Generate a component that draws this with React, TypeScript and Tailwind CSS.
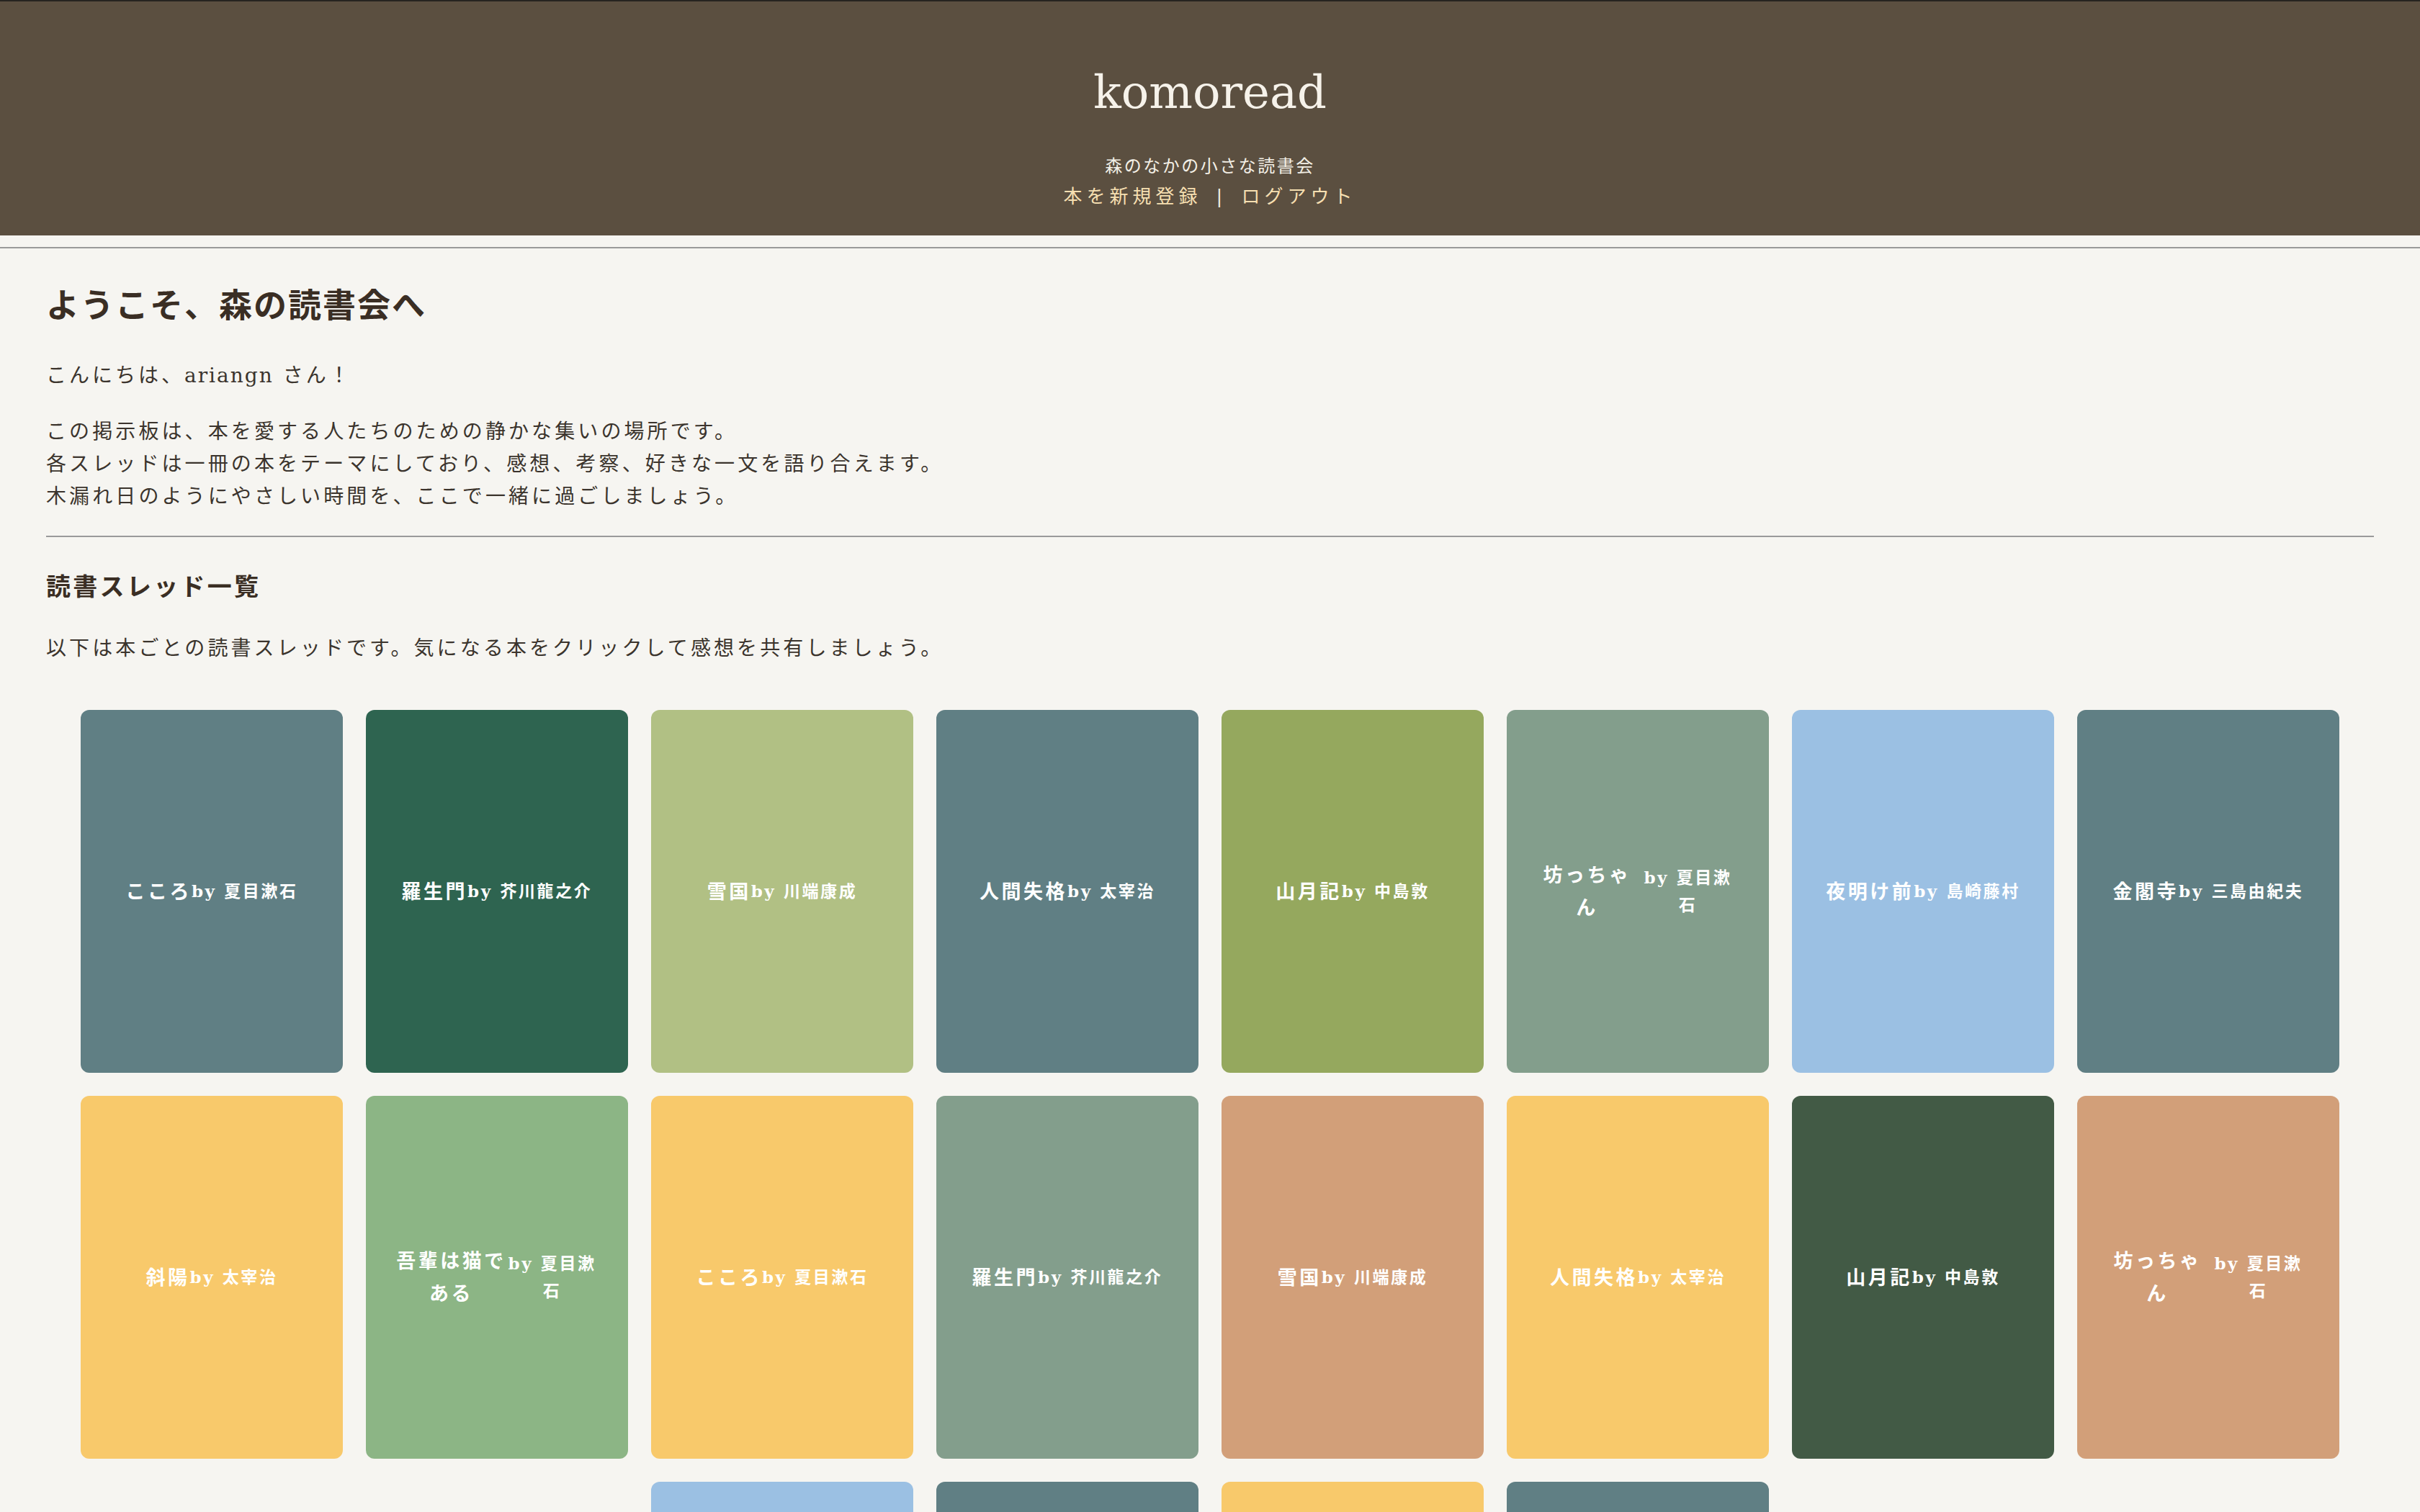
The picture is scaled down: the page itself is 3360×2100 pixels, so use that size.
// 森の読書会 — トップページ（スレッド一覧）

const FONT = "font-['DejaVu_Serif','Noto_Sans_CJK_JP',sans-serif]"

interface Book {
  title: string
  author: string
  color: string
}

const books: Book[] = [
  { title: 'こころ', author: '夏目漱石', color: 'bg-[#607f84]' },
  { title: '羅生門', author: '芥川龍之介', color: 'bg-[#2e6450]' },
  { title: '雪国', author: '川端康成', color: 'bg-[#b1c084]' },
  { title: '人間失格', author: '太宰治', color: 'bg-[#607f84]' },
  { title: '山月記', author: '中島敦', color: 'bg-[#95a85e]' },
  { title: '坊っちゃん', author: '夏目漱石', color: 'bg-[#839e8c]' },
  { title: '夜明け前', author: '島崎藤村', color: 'bg-[#9bc0e3]' },
  { title: '金閣寺', author: '三島由紀夫', color: 'bg-[#607f84]' },
  { title: '斜陽', author: '太宰治', color: 'bg-[#f8c96b]' },
  { title: '吾輩は猫である', author: '夏目漱石', color: 'bg-[#8cb585]' },
  { title: 'こころ', author: '夏目漱石', color: 'bg-[#f8c96b]' },
  { title: '羅生門', author: '芥川龍之介', color: 'bg-[#839e8c]' },
  { title: '雪国', author: '川端康成', color: 'bg-[#d29f79]' },
  { title: '人間失格', author: '太宰治', color: 'bg-[#f8c96b]' },
  { title: '山月記', author: '中島敦', color: 'bg-[#425a45]' },
  { title: '坊っちゃん', author: '夏目漱石', color: 'bg-[#d29f79]' },
  { title: '夜明け前', author: '島崎藤村', color: 'bg-[#9bc0e3]' },
  { title: '金閣寺', author: '三島由紀夫', color: 'bg-[#607f84]' },
  { title: '斜陽', author: '太宰治', color: 'bg-[#f8c96b]' },
  { title: '吾輩は猫である', author: '夏目漱石', color: 'bg-[#607f84]' },
]

function BookCard({ book }: { book: Book }) {
  return (
    <a
      href="#"
      className={`${book.color} w-[364px] h-[504px] rounded-[12px] flex items-center justify-center px-[42px] text-white text-center`}
    >
      <div className="flex items-center">
        <span className="text-[27px] tracking-[3.5px] leading-[45px] font-bold">
          {book.title}
        </span>
        <span className="shrink-[0.5] text-[23px] tracking-[2.6px] leading-[38px] font-bold">
          by {book.author}
        </span>
      </div>
    </a>
  )
}

export default function App() {
  return (
    <div className={`min-h-screen bg-[#f6f5f1] text-[#3b342d] ${FONT}`}>

      {/* ヘッダー */}
      <header className="h-[327px] bg-[#5b4f40] border-t-2 border-[#262320] pt-[94px] flex flex-col items-center">
        <h1 className="text-[64px] leading-[64px] text-[#f6f2ea]">komoread</h1>
        <p className="mt-[53px] text-[24px] leading-[36px] tracking-[2.5px] text-[#f3efe6]">
          森のなかの小さな読書会
        </p>
        <nav className="mt-[6px] flex items-center text-[26px] leading-[36px] tracking-[6px]">
          <a href="#" className="text-[#f6dfb1]">本を新規登録</a>
          <span className="mx-[20px] text-[#f3efe6]">|</span>
          <a href="#" className="text-[#f6dfb1]">ログアウト</a>
        </nav>
      </header>

      <div className="mt-4 border-t-2 border-[#9a9a9a]" />

      {/* 本文 */}
      <main className="px-[64px] pt-[49px] pb-[80px]">
        <h2 className="text-[46px] leading-[60px] tracking-[2px] font-bold text-[#3a2e24]">
          ようこそ、森の読書会へ
        </h2>

        <p className="mt-[45px] text-[28px] leading-[45px] tracking-[4px]">
          こんにちは、<span className="tracking-[2px]">ariangn</span> さん！
        </p>

        <p className="mt-[33px] text-[28px] leading-[45px] tracking-[4.1px]">
          この掲示板は、本を愛する人たちのための静かな集いの場所です。<br />
          各スレッドは一冊の本をテーマにしており、感想、考察、好きな一文を語り合えます。<br />
          木漏れ日のようにやさしい時間を、ここで一緒に過ごしましょう。
        </p>

        <div className="mt-[32px] border-t-2 border-[#9a9a9a]" />

        <h3 className="mt-[45px] text-[34px] leading-[48px] tracking-[3.3px] font-bold text-[#3a2e24]">
          読書スレッド一覧
        </h3>

        <p className="mt-[39px] text-[28px] leading-[45px] tracking-[4.1px]">
          以下は本ごとの読書スレッドです。気になる本をクリックして感想を共有しましょう。
        </p>

        {/* スレッド一覧 */}
        <div className="mt-[63px] flex flex-wrap justify-center gap-[32px]">
          {books.map((book, i) => (
            <BookCard key={i} book={book} />
          ))}
        </div>
      </main>
    </div>
  )
}
